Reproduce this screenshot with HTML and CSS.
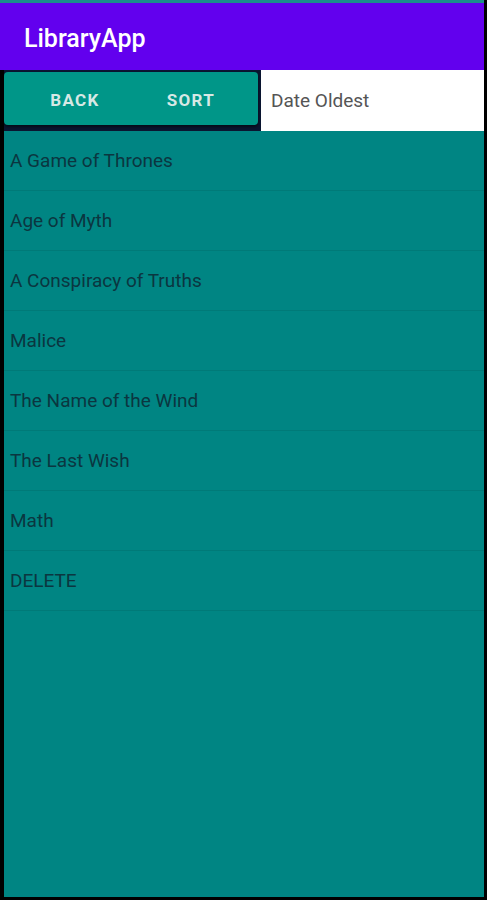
FILE: index.html
```html
<!DOCTYPE html>
<html lang="en">
<head>
    <meta charset="UTF-8">
    <meta name="viewport" content="width=device-width, initial-scale=1.0">
    <title>LibraryApp</title>
    <link rel="stylesheet" href="styles.css">
</head>
<body>
    <div class="screen">
        <div class="status"></div>
        <header class="appbar">LibraryApp</header>
        <div class="content">
            <div class="toolbar">
                <div class="btn-group">
                    <button class="btn btn-back">Back</button>
                    <button class="btn btn-sort">Sort</button>
                </div>
                <div class="spinner">Date Oldest</div>
            </div>
            <ul class="book-list">
                <li>A Game of Thrones</li>
                <li>Age of Myth</li>
                <li>A Conspiracy of Truths</li>
                <li>Malice</li>
                <li>The Name of the Wind</li>
                <li>The Last Wish</li>
                <li>Math</li>
                <li>DELETE</li>
            </ul>
        </div>
    </div>
</body>
</html>
```

FILE: styles.css
```css
body {
    margin: 0;
    background-color: #000;
    font-family: Roboto, "Noto Sans", sans-serif;
    height: 900px;
    overflow: hidden;
}

.screen {
    margin-right: 3px;
    height: 897px;
    display: flex;
    flex-direction: column;
}

.status {
    height: 3px;
    background-color: #1b8c8c;
}

.appbar {
    height: 67px;
    background-color: #6200ee;
    color: #fff;
    font-size: 25px;
    font-weight: 500;
    padding-left: 24px;
    padding-top: 3px;
    display: flex;
    align-items: center;
    box-sizing: border-box;
}

.content {
    margin-left: 4px;
    flex: 1;
    display: flex;
    flex-direction: column;
}

.toolbar {
    height: 61px;
    display: flex;
    background-color: #0a1530;
}

.btn-group {
    width: 254px;
    margin: 2px 0 6px;
    display: flex;
    background-color: #009688;
    border-radius: 4px;
    box-shadow: 0 2px 3px rgba(0, 0, 0, 0.5);
}

.btn {
    background: none;
    color: #d6e8e5;
    border: none;
    padding: 3px 0 0;
    font-family: inherit;
    font-size: 17px;
    font-weight: 700;
    letter-spacing: 1.3px;
    text-transform: uppercase;
}

.btn-back {
    width: 142px;
}

.btn-sort {
    flex: 1;
    padding-right: 22px;
}

.spinner {
    flex: 1;
    margin-left: 3px;
    background-color: #fff;
    color: #555;
    font-size: 19px;
    padding-left: 10px;
    display: flex;
    align-items: center;
}

.book-list {
    list-style-type: none;
    margin: 0;
    padding: 0;
    flex: 1;
    background-color: #008583;
}

.book-list li {
    height: 60px;
    box-sizing: border-box;
    border-bottom: 1px solid #007a78;
    padding-left: 6px;
    display: flex;
    align-items: center;
    color: #0b3640;
    font-size: 19px;
}
```
